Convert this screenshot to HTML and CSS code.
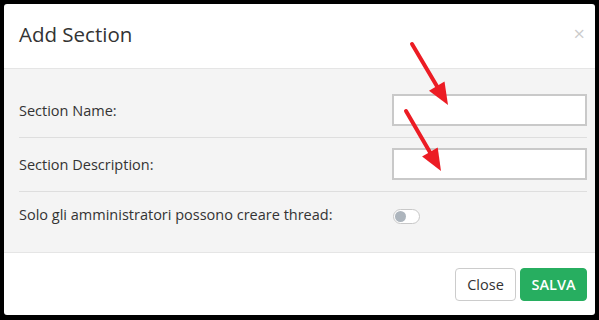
FILE: index.html
```html
<!DOCTYPE html>
<html>
<head>
<meta charset="utf-8">
<link rel="stylesheet" href="styles.css">
</head>
<body>
<div class="modal">
  <div class="modal-header">
    <h4 class="modal-title">Add Section</h4>
    <span class="close">×</span>
  </div>
  <div class="modal-body">
    <div class="row">
      <label class="label">Section Name:</label>
      <input class="input" type="text">
    </div>
    <div class="row">
      <label class="label">Section Description:</label>
      <input class="input" type="text">
    </div>
    <div class="row row-last">
      <label class="label">Solo gli amministratori possono creare thread:</label>
      <span class="toggle"><span class="knob"></span></span>
    </div>
  </div>
  <div class="modal-footer">
    <button class="btn btn-close">Close</button>
    <button class="btn btn-save">SALVA</button>
  </div>
</div>
<svg class="arrows" width="599" height="320" viewBox="0 0 599 320">
  <line x1="412" y1="44" x2="438" y2="88" stroke="#ec1c24" stroke-width="4" stroke-linecap="round"/>
  <polygon points="448,105 429,90.7 444.5,81.5" fill="#ec1c24"/>
  <line x1="406" y1="111" x2="431" y2="154" stroke="#ec1c24" stroke-width="4" stroke-linecap="round"/>
  <polygon points="441,171 422.1,156.5 437.7,147.5" fill="#ec1c24"/>
</svg>
</body>
</html>
```
FILE: styles.css
```css
html, body {
  margin: 0;
  padding: 0;
}
body {
  background: #000;
  width: 599px;
  height: 320px;
  position: relative;
  padding: 4px 0 0 4px;
  box-sizing: border-box;
  font-family: "Open Sans", "DejaVu Sans", sans-serif;
  color: #333;
}
.modal {
  width: 591px;
  height: 311px;
  background: #fff;
  border-radius: 3px;
  display: flex;
  flex-direction: column;
  overflow: hidden;
}
.modal-header {
  height: 65px;
  box-sizing: border-box;
  border-bottom: 1px solid #e5e5e5;
  display: flex;
  align-items: center;
  justify-content: space-between;
  padding: 0 10px 4px 15px;
}
.modal-title {
  margin: 0;
  font-size: 20.5px;
  font-weight: 400;
  color: #333;
}
.close {
  font-size: 20px;
  line-height: 1;
  color: #000;
  opacity: 0.2;
}
.modal-body {
  background: #f4f4f4;
  height: 184px;
  box-sizing: border-box;
  border-bottom: 1px solid #e5e5e5;
  padding: 15px 8px 0 15px;
}
.row {
  display: flex;
  align-items: center;
  justify-content: space-between;
  padding: 10px 0 11px;
  border-bottom: 1px solid #dedede;
}
.row-last {
  border-bottom: none;
  padding: 13px 0;
}
.label {
  font-size: 14.5px;
  color: #333;
}
.input {
  width: 195px;
  height: 32px;
  box-sizing: border-box;
  border: 2px solid #c9c9c9;
  background: #fff;
  margin: 0;
  padding: 0 6px;
}
.toggle {
  width: 27px;
  height: 15px;
  box-sizing: border-box;
  border: 1px solid #c8c8c8;
  border-radius: 8px;
  background: #fff;
  margin-right: 167px;
  margin-top: 4px;
  display: flex;
  align-items: center;
  padding-left: 1px;
}
.knob {
  width: 11px;
  height: 11px;
  border-radius: 50%;
  background: #adb5bd;
}
.modal-footer {
  flex: 1;
  display: flex;
  align-items: center;
  justify-content: flex-end;
  gap: 4px;
  padding: 0 8px 0 0;
}
.btn {
  font-family: "Open Sans", "DejaVu Sans", sans-serif;
  font-size: 14.5px;
  height: 33px;
  border-radius: 4px;
  margin: 0;
  padding: 0 10px;
  cursor: pointer;
}
.btn-close {
  width: 61px;
  background: #fff;
  border: 1px solid #ccc;
  color: #333;
}
.btn-save {
  width: 67px;
  background: #27ae60;
  border: 1px solid #27ae60;
  color: #fff;
  font-weight: 600;
}
.arrows {
  position: absolute;
  left: 0;
  top: 0;
}
```
